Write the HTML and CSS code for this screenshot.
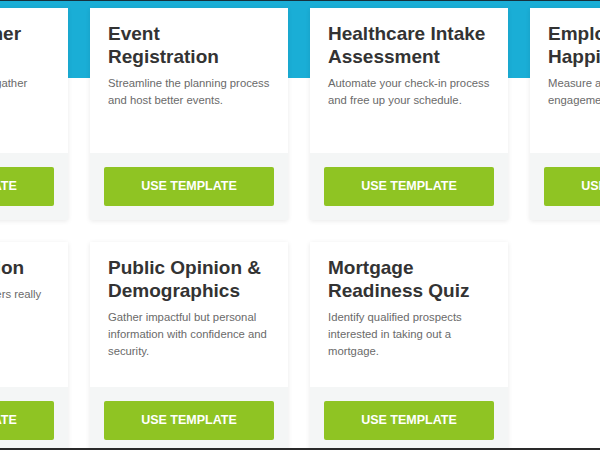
FILE: index.html
```html
<!DOCTYPE html>
<html>
<head>
<meta charset="utf-8">
<link rel="stylesheet" href="styles.css">
</head>
<body>
<div class="frame">
  <div class="grid">
    <div class="card">
      <div class="card-body">
        <h3 class="title">New Customer Onboarding</h3>
        <p class="desc">Welcome clients and gather information.</p>
      </div>
      <div class="card-foot"><a class="btn">USE TEMPLATE</a></div>
    </div>
    <div class="card">
      <div class="card-body">
        <h3 class="title">Event Registration</h3>
        <p class="desc">Streamline the planning process and host better events.</p>
      </div>
      <div class="card-foot"><a class="btn">USE TEMPLATE</a></div>
    </div>
    <div class="card">
      <div class="card-body">
        <h3 class="title">Healthcare Intake Assessment</h3>
        <p class="desc">Automate your check-in process and free up your schedule.</p>
      </div>
      <div class="card-foot"><a class="btn">USE TEMPLATE</a></div>
    </div>
    <div class="card">
      <div class="card-body">
        <h3 class="title">Employee Happiness</h3>
        <p class="desc">Measure and improve employee engagement.</p>
      </div>
      <div class="card-foot"><a class="btn">USE TEMPLATE</a></div>
    </div>
    <div class="card">
      <div class="card-body">
        <h3 class="title">Class Reaction</h3>
        <p class="desc">Find out what customers really think.</p>
      </div>
      <div class="card-foot"><a class="btn">USE TEMPLATE</a></div>
    </div>
    <div class="card">
      <div class="card-body">
        <h3 class="title">Public Opinion &amp; Demographics</h3>
        <p class="desc">Gather impactful but personal information with confidence and security.</p>
      </div>
      <div class="card-foot"><a class="btn">USE TEMPLATE</a></div>
    </div>
    <div class="card">
      <div class="card-body">
        <h3 class="title">Mortgage Readiness Quiz</h3>
        <p class="desc">Identify qualified prospects interested in taking out a mortgage.</p>
      </div>
      <div class="card-foot"><a class="btn">USE TEMPLATE</a></div>
    </div>
  </div>
</div>
</body>
</html>
```
FILE: styles.css
```css
html, body {
  margin: 0;
  padding: 0;
}
body {
  font-family: "Liberation Sans", Arial, sans-serif;
  background: #ffffff;
  overflow: hidden;
}
.frame {
  height: 450px;
  box-sizing: border-box;
  overflow: hidden;
  border-top: 1px solid #17313d;
  border-bottom: 2px solid #2a2a2a;
  background: linear-gradient(#1aaed6 0, #1aaed6 77px, #ffffff 77px);
}
.grid {
  display: grid;
  grid-template-columns: repeat(4, 198px);
  column-gap: 22px;
  row-gap: 22px;
  margin-left: -130px;
  padding-top: 7px;
}
.card {
  background: #ffffff;
  box-shadow: 0 1px 5px rgba(0, 0, 0, 0.09);
  display: flex;
  flex-direction: column;
}
.card-body {
  height: 145px;
  box-sizing: border-box;
  padding: 14px 18px 0 18px;
}
.title {
  margin: 0;
  font-size: 19px;
  line-height: 23px;
  font-weight: bold;
  color: #333333;
}
.desc {
  margin: 7px 0 0 0;
  font-size: 11.3px;
  line-height: 17px;
  color: #6a6a6a;
}
.card-foot {
  background: #f4f6f6;
  padding: 14px;
}
.btn {
  display: block;
  height: 39px;
  line-height: 39px;
  border-radius: 2px;
  background: #8fc423;
  color: #ffffff;
  text-align: center;
  font-weight: bold;
  font-size: 12.5px;
}
```
